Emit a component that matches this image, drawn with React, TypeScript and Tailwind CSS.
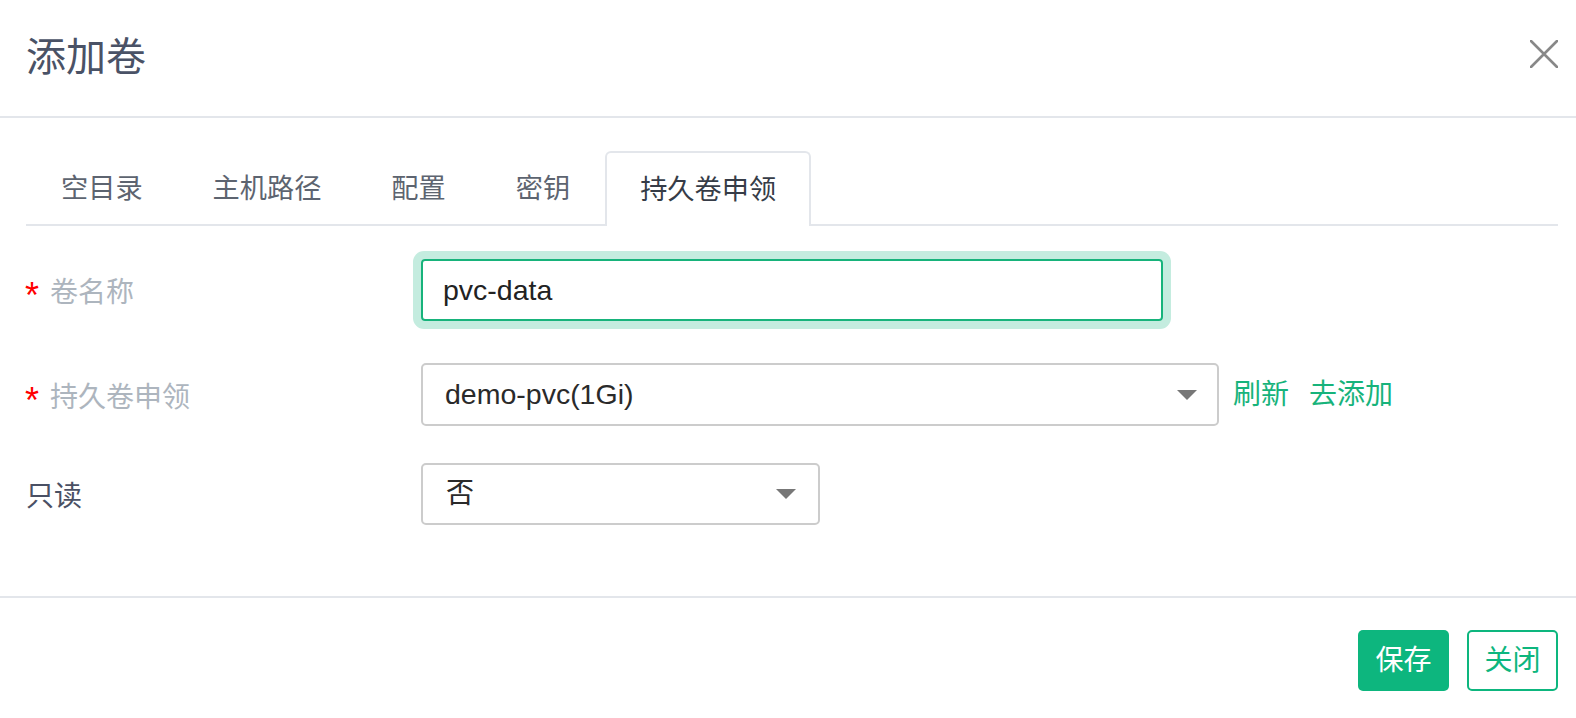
const font = { fontFamily: '"Liberation Sans", "Noto Sans CJK SC", sans-serif' };

function Caret() {
  return (
    <svg width="20" height="10" viewBox="0 0 20 10" className="shrink-0">
      <path d="M0 0h20L10 10z" fill="#777" />
    </svg>
  );
}

function Star() {
  return <span className="text-[#ff0000] text-[36px] leading-none w-[25px] mt-[6px] -ml-[1px]">*</span>;
}

export default function App() {
  const tabs = ["空目录", "主机路径", "配置", "密钥", "持久卷申领"];
  return (
    <div className="w-[1576px] h-[718px] bg-white overflow-hidden" style={font}>
      {/* header */}
      <div className="h-[116px] border-b-2 border-[#e3e6eb] flex items-center justify-between pl-[26px] pr-[18px] box-content">
        <div className="text-[40px] text-[#4a5266] leading-none -mt-[2px]">添加卷</div>
        <svg width="28" height="28" viewBox="0 0 28 28" className="-mt-[8px]">
          <path d="M1 1L27 27M27 1L1 27" stroke="#888" strokeWidth="2.6" strokeLinecap="round" />
        </svg>
      </div>

      <div className="pl-[26px] pr-[18px]">
        {/* tabs */}
        <div className="mt-[33px] flex border-b-2 border-[#e3e6eb] h-[75px]">
          {tabs.map((t, i) =>
            i === 4 ? (
              <div
                key={t}
                className="px-[33px] h-[75px] -mb-[2px] border-2 border-b-0 border-[#e3e6eb] rounded-t-[6px] bg-white flex items-center text-[27.2px] text-[#363c47]"
              >
                <span className="mt-[2px]">{t}</span>
              </div>
            ) : (
              <div key={t} className="px-[35px] h-[73px] flex items-center text-[27.2px] text-[#5d6470]">
                <span className="mt-[4px]">{t}</span>
              </div>
            )
          )}
        </div>

        {/* form */}
        <div className="mt-[33px] flex items-center h-[62px]">
          <div className="w-[395px] flex items-center text-[28px] text-[#adb5be] mt-[6px]">
            <Star />卷名称
          </div>
          <div className="w-[742px] h-[62px] border-2 border-[#17b37b] rounded-[4px] ring-[8px] ring-[#c4ecdf] flex items-center px-[20px] text-[28.5px] text-[#222]">
            pvc-data
          </div>
        </div>

        <div className="mt-[42px] flex items-center h-[63px]">
          <div className="w-[395px] flex items-center text-[28px] text-[#adb5be] mt-[6px]">
            <Star />持久卷申领
          </div>
          <div className="w-[798px] h-[63px] border-2 border-[#cccccc] rounded-[5px] flex items-center justify-between pl-[22px] pr-[20px] text-[28.5px] text-[#2a2a2a]">
            <span>demo-pvc(1Gi)</span>
            <Caret />
          </div>
          <div className="ml-[14px] flex gap-[20px] text-[28px] text-[#17b37b]">
            <span>刷新</span>
            <span>去添加</span>
          </div>
        </div>

        <div className="mt-[37px] flex items-center h-[62px]">
          <div className="w-[395px] text-[28px] text-[#4a5064] mt-[6px]">只读</div>
          <div className="w-[399px] h-[62px] border-2 border-[#cccccc] rounded-[5px] flex items-center justify-between pl-[23px] pr-[22px] text-[28px] text-[#2a2a2a]">
            <span>否</span>
            <Caret />
          </div>
        </div>
      </div>

      {/* footer */}
      <div className="mt-[71px] border-t-2 border-[#e3e6eb] pt-[32px] flex justify-end gap-[18px] pr-[18px]">
        <button className="w-[91px] h-[61px] rounded-[5px] bg-[#0db67e] text-white text-[28px]">保存</button>
        <button className="w-[91px] h-[61px] rounded-[5px] border-2 border-[#0db67e] bg-white text-[#0db67e] text-[28px]">关闭</button>
      </div>
    </div>
  );
}
